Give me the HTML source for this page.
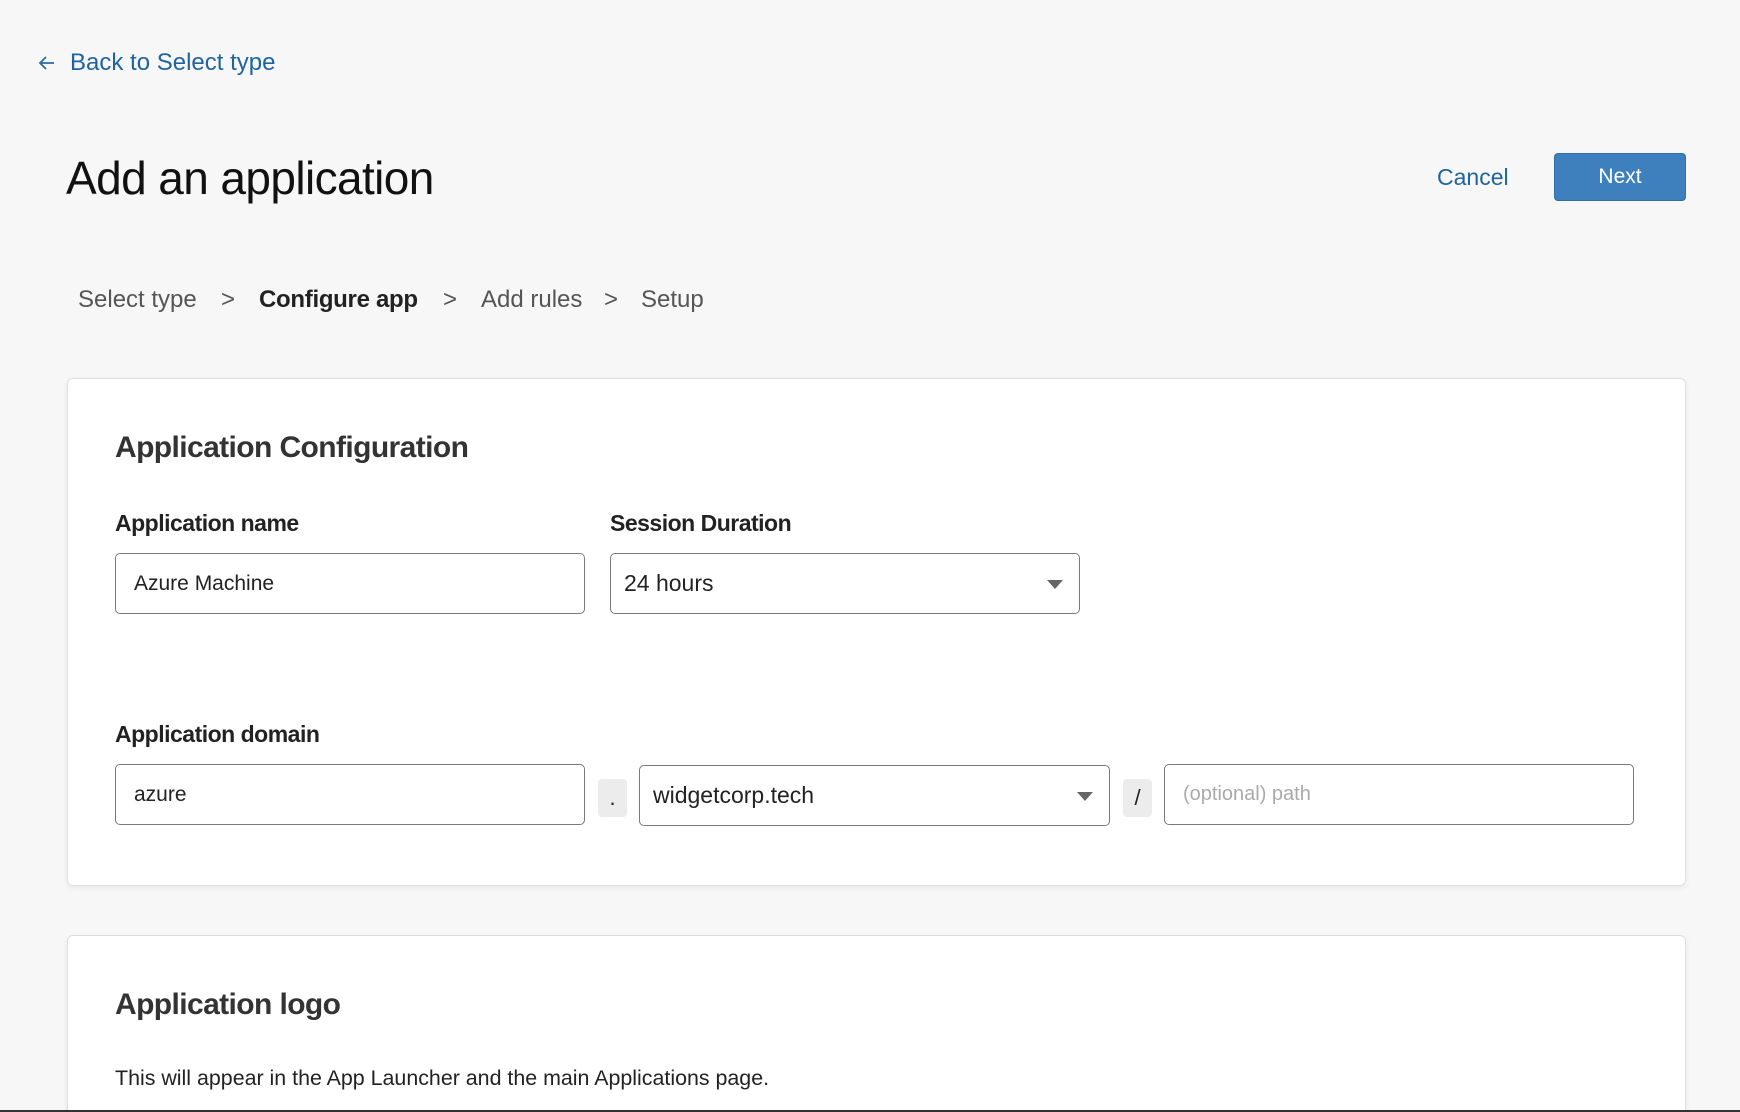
<!DOCTYPE html>
<html><head><meta charset="utf-8"><style>
*{box-sizing:border-box;margin:0;padding:0}
html,body{width:1740px;height:1112px;overflow:hidden}
body{background:#f7f7f7;font-family:"Liberation Sans",sans-serif;color:#222}
#w{position:relative;width:1740px;height:1112px;overflow:hidden}
.a{position:absolute;white-space:nowrap}
.card{position:absolute;background:#fff;border:1px solid #dedede;border-radius:6px;box-shadow:0 2px 6px rgba(0,0,0,.06)}
.in{position:absolute;border:1px solid #7a7a7a;border-radius:5px;background:#fff;height:61px;display:flex;align-items:center;padding-left:18px;font-size:21px;color:#222}
.tri{position:absolute;right:16px;top:26px;width:0;height:0;border-left:8px solid transparent;border-right:8px solid transparent;border-top:9px solid #666}
.sep{position:absolute;background:#ececec;border-radius:4px;width:29px;height:38px;display:flex;align-items:center;justify-content:center;font-size:22px;color:#222}
.lbl{font-size:23px;font-weight:bold;color:#222;letter-spacing:-0.5px}
.st{font-size:24px;color:#555;top:286px}
</style></head><body><div id="w">
<svg class="a" style="left:38px;top:54px" width="18" height="18" viewBox="0 0 18 18"><path d="M16 9H2M8 3L2 9l6 6" fill="none" stroke="#2b6aa3" stroke-width="1.8"/></svg>
<div class="a" style="left:70px;top:49px;font-size:24px;color:#1f64a0">Back to Select type</div>
<div class="a" style="left:66px;top:151px;font-size:46px;color:#111;letter-spacing:-0.6px">Add an application</div>
<div class="a" style="left:1437px;top:164px;font-size:23px;color:#1f64a0">Cancel</div>
<div class="a" style="left:1554px;top:153px;width:132px;height:48px;background:#3e7fbd;border:1px solid #2f6ea8;border-radius:4px;color:#fff;font-size:21px;display:flex;align-items:center;justify-content:center">Next</div>
<div class="a st" style="left:78px">Select type</div>
<div class="a st" style="left:221px">&gt;</div>
<div class="a st" style="left:259px;color:#222;font-weight:bold;letter-spacing:-0.3px">Configure app</div>
<div class="a st" style="left:443px">&gt;</div>
<div class="a st" style="left:481px">Add rules</div>
<div class="a st" style="left:604px">&gt;</div>
<div class="a st" style="left:641px">Setup</div>

<div class="card" style="left:67px;top:378px;width:1619px;height:508px"></div>
<div class="a" style="left:115px;top:431px;font-size:30px;font-weight:bold;color:#333;letter-spacing:-0.6px">Application Configuration</div>
<div class="a lbl" style="left:115px;top:510px">Application name</div>
<div class="a lbl" style="left:610px;top:510px">Session Duration</div>
<div class="in" style="left:115px;top:553px;width:470px">Azure Machine</div>
<div class="in" style="left:610px;top:553px;width:470px;font-size:23px;padding-left:13px">24 hours<div class="tri"></div></div>
<div class="a lbl" style="left:115px;top:721px">Application domain</div>
<div class="in" style="left:115px;top:764px;width:470px">azure</div>
<div class="sep" style="left:598px;top:779px">.</div>
<div class="in" style="left:639px;top:765px;width:471px;font-size:23px;padding-left:13px">widgetcorp.tech<div class="tri"></div></div>
<div class="sep" style="left:1123px;top:779px">/</div>
<div class="in" style="left:1164px;top:764px;width:470px;color:#aaa;font-size:20px">(optional) path</div>

<div class="card" style="left:67px;top:935px;width:1619px;height:200px"></div>
<div class="a" style="left:115px;top:988px;font-size:30px;font-weight:bold;color:#333;letter-spacing:-0.6px">Application logo</div>
<div class="a" style="left:115px;top:1066px;font-size:21.4px;color:#222">This will appear in the App Launcher and the main Applications page.</div>
<div class="a" style="left:0;top:1110px;width:1740px;height:2px;background:#333"></div>
</div></body></html>
